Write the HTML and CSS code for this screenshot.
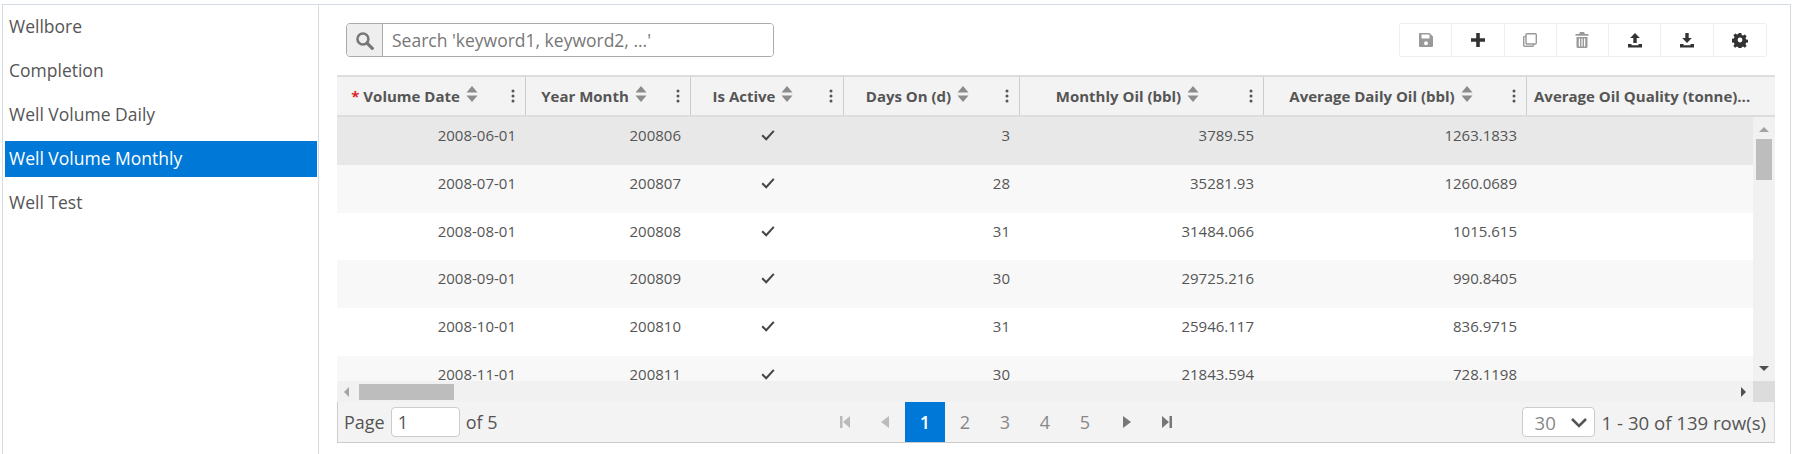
FILE: index.html
```html
<!DOCTYPE html>
<html lang="en">
<head>
    <meta charset="UTF-8">
    <meta name="viewport" content="width=device-width, initial-scale=1.0">
    <title>Well Volume Monthly</title>
    <link rel="stylesheet" href="styles.css">
</head>
<body>

    <svg class="defs">
        <symbol id="sort" viewBox="0 0 12 16"><path d="M6 0l5.500 6.500H.5zM6 16L.5 9.500h11z"/></symbol>
        <symbol id="kebab" viewBox="0 0 4 14"><circle cx="2" cy="2" r="1.500"/><circle cx="2" cy="7" r="1.500"/><circle cx="2" cy="12" r="1.500"/></symbol>
        <symbol id="check" viewBox="0 0 14 12"><path d="M1.200 6.200l4 4 7.600-8.400" fill="none" stroke="currentColor" stroke-width="2"/></symbol>
    </svg>

    <div class="frame">
        <!-- left menu -->
        <ul class="menu">
            <li>Wellbore</li>
            <li>Completion</li>
            <li>Well Volume Daily</li>
            <li class="active">Well Volume Monthly</li>
            <li>Well Test</li>
        </ul>

        <div class="content">
            <div class="toolbar">
                <div class="search">
                    <span class="search-icon">
                        <svg width="19" height="19" viewBox="0 0 18 18"><circle cx="7.500" cy="7.500" r="5.200" fill="none" stroke="currentColor" stroke-width="2.400"/><path d="M11.400 11.400l5 5" stroke="currentColor" stroke-width="3" stroke-linecap="round"/></svg>
                    </span>
                    <input type="text" placeholder="Search 'keyword1, keyword2, ...'">
                </div>
                <div class="actions">
                    <button class="off"><svg width="16" height="16" viewBox="0 0 16 16"><path fill-rule="evenodd" d="M2 1h9.500L15 4.500V14a1 1 0 0 1-1 1H2a1 1 0 0 1-1-1V2a1 1 0 0 1 1-1zm1.500 1.500v4h8v-4zM8 9.200a2 2 0 1 0 0 4 2 2 0 0 0 0-4z"/></svg></button>
                    <button><svg width="16" height="16" viewBox="0 0 16 16"><path d="M6.200 1h3.600v5.200H15v3.600H9.800V15H6.200V9.800H1V6.200h5.200z"/></svg></button>
                    <button class="off"><svg width="16" height="16" viewBox="0 0 16 16"><path fill="none" stroke="currentColor" stroke-width="1.400" d="M5 1.700h8.300a1 1 0 0 1 1 1V11a1 1 0 0 1-1 1H5a1 1 0 0 1-1-1V2.700a1 1 0 0 1 1-1z"/><path fill="none" stroke="currentColor" stroke-width="1.400" d="M4 4.500H2.700a1 1 0 0 0-1 1v7.800a1 1 0 0 0 1 1H10.500a1 1 0 0 0 1-1V12"/></svg></button>
                    <button class="off"><svg width="14" height="16" viewBox="0 0 14 16"><path fill-rule="evenodd" d="M5 0h4l1 2h3.500v1.800H.5V2H4zM1.500 5h11v9.500a1.500 1.500 0 0 1-1.500 1.500H3a1.500 1.500 0 0 1-1.500-1.500zm2.300 1.500V14.500h1.200V6.500zm2.600 0V14.500h1.200V6.500zm2.600 0V14.500h1.200V6.500z"/></svg></button>
                    <button><svg width="16" height="16" viewBox="0 0 16 16"><path d="M8 1l4.800 5H9.700v5H6.300V6H3.200zM1 12h3.500v1.200h7V12H15v3.500H1z"/></svg></button>
                    <button><svg width="16" height="16" viewBox="0 0 16 16"><path d="M6.300 1h3.400v5h3.100L8 11 3.200 6h3.100zM1 12h3.500v1.200h7V12H15v3.500H1z"/></svg></button>
                    <button><svg width="16" height="16" viewBox="0 0 16 16"><path fill-rule="evenodd" d="M6.700 1h2.600l.4 2 1.300.6 1.800-1.100 1.800 1.800-1.100 1.800.6 1.300 2 .4v2.600l-2 .4-.6 1.300 1.100 1.800-1.800 1.800-1.800-1.100-1.300.6-.4 2H6.700l-.4-2-1.300-.6-1.800 1.100-1.800-1.800 1.100-1.800-.6-1.300-2-.4V6.800l2-.4.6-1.300-1.100-1.800 1.800-1.800 1.800 1.100 1.300-.6zM8 5.600a2.400 2.400 0 1 0 0 4.800 2.400 2.400 0 0 0 0-4.800z"/></svg></button>
                </div>
            </div>

            <div class="grid">
                <div class="grid-head">
                    <div class="hcell first"><span class="hlabel"><span class="req">*</span>Volume Date<svg class="sort"><use href="#sort"/></svg></span><svg class="kebab"><use href="#kebab"/></svg></div>
                    <div class="hcell"><span class="hlabel">Year Month<svg class="sort"><use href="#sort"/></svg></span><svg class="kebab"><use href="#kebab"/></svg></div>
                    <div class="hcell"><span class="hlabel">Is Active<svg class="sort"><use href="#sort"/></svg></span><svg class="kebab"><use href="#kebab"/></svg></div>
                    <div class="hcell"><span class="hlabel">Days On (d)<svg class="sort"><use href="#sort"/></svg></span><svg class="kebab"><use href="#kebab"/></svg></div>
                    <div class="hcell"><span class="hlabel">Monthly Oil (bbl)<svg class="sort"><use href="#sort"/></svg></span><svg class="kebab"><use href="#kebab"/></svg></div>
                    <div class="hcell"><span class="hlabel">Average Daily Oil (bbl)<svg class="sort"><use href="#sort"/></svg></span><svg class="kebab"><use href="#kebab"/></svg></div>
                    <div class="hcell last"><span class="hlabel">Average Oil Quality (tonne)...</span></div>
                </div>

                <div class="grid-body">
                    <div class="rows">
                        <div class="row selected"><span>2008-06-01</span><span>200806</span><span class="mid"><svg class="check"><use href="#check"/></svg></span><span>3</span><span>3789.55</span><span>1263.1833</span><span></span></div>
                        <div class="row"><span>2008-07-01</span><span>200807</span><span class="mid"><svg class="check"><use href="#check"/></svg></span><span>28</span><span>35281.93</span><span>1260.0689</span><span></span></div>
                        <div class="row"><span>2008-08-01</span><span>200808</span><span class="mid"><svg class="check"><use href="#check"/></svg></span><span>31</span><span>31484.066</span><span>1015.615</span><span></span></div>
                        <div class="row"><span>2008-09-01</span><span>200809</span><span class="mid"><svg class="check"><use href="#check"/></svg></span><span>30</span><span>29725.216</span><span>990.8405</span><span></span></div>
                        <div class="row"><span>2008-10-01</span><span>200810</span><span class="mid"><svg class="check"><use href="#check"/></svg></span><span>31</span><span>25946.117</span><span>836.9715</span><span></span></div>
                        <div class="row"><span>2008-11-01</span><span>200811</span><span class="mid"><svg class="check"><use href="#check"/></svg></span><span>30</span><span>21843.594</span><span>728.1198</span><span></span></div>
                    </div>
                    <div class="vscroll">
                        <i class="arrow up"></i>
                        <div class="vthumb"></div>
                        <i class="arrow down"></i>
                    </div>
                </div>

                <div class="hscroll">
                    <div class="htrack">
                        <i class="arrow left"></i>
                        <div class="hthumb"></div>
                        <i class="arrow right"></i>
                    </div>
                    <div class="corner"></div>
                </div>

                <div class="pager">
                    <div class="page-input">
                        <span>Page</span>
                        <input type="text" value="1">
                        <span>of 5</span>
                    </div>
                    <div class="pages">
                        <a class="nav dim"><svg width="12" height="14" viewBox="0 0 12 14"><path d="M1 1h2.500v12H1zM11 1v12L4 7z"/></svg></a>
                        <a class="nav dim"><svg width="10" height="14" viewBox="0 0 10 14"><path d="M9 1v12L1 7z"/></svg></a>
                        <a class="current">1</a>
                        <a>2</a>
                        <a>3</a>
                        <a>4</a>
                        <a>5</a>
                        <a class="nav fwd"><svg width="10" height="14" viewBox="0 0 10 14"><path d="M1 1v12l8-6z"/></svg></a>
                        <a class="nav fwd"><svg width="12" height="14" viewBox="0 0 12 14"><path d="M1 1v12l7-6zM8.500 1H11v12H8.500z"/></svg></a>
                    </div>
                    <div class="page-size">
                        <div class="size-select">
                            <span>30</span>
                            <svg width="18" height="11" viewBox="0 0 18 11"><path d="M2 2l7 7 7-7" fill="none" stroke="currentColor" stroke-width="2.600"/></svg>
                        </div>
                        <span>1 - 30 of 139 row(s)</span>
                    </div>
                </div>
            </div>
        </div>
    </div>

</body>
</html>
```

FILE: styles.css
```css
html, body {
    margin: 0;
    padding: 0;
    height: 100%;
    overflow: hidden;
    background-color: #ffffff;
}
body {
    font-family: "Open Sans", Arial, sans-serif;
    color: #555;
    padding: 4px 2px 0 2px;
    box-sizing: border-box;
}
.defs {
    display: none;
}
.frame {
    display: flex;
    height: 460px;
    border-top: 1px solid #d5dbe3;
    border-left: 1px solid #d5dbe3;
    border-right: 1px solid #d5dbe3;
}

/* left menu */
.menu {
    width: 316px;
    flex: none;
    margin: 0;
    padding: 4px 1px 0 2px;
    box-sizing: border-box;
    list-style: none;
    border-right: 1px solid #d5dbe3;
}
.menu li {
    height: 36px;
    line-height: 35px;
    margin-bottom: 8px;
    padding-left: 4px;
    font-size: 17.500px;
    color: #555;
}
.menu li.active {
    background-color: #0078d7;
    color: #fff;
}

.content {
    flex: 1;
    padding: 18px 15px 0 18px;
    min-width: 0;
}
.toolbar {
    display: flex;
    justify-content: space-between;
    padding: 0 8px 0 9px;
    height: 34px;
    margin-bottom: 18px;
}

/* search box */
.search {
    display: flex;
    width: 428px;
    height: 34px;
    border: 1px solid #aaa;
    border-radius: 4px;
    box-sizing: border-box;
    overflow: hidden;
}
.search-icon {
    width: 35px;
    flex: none;
    display: flex;
    align-items: center;
    justify-content: center;
    background-color: #eee;
    border-right: 1px solid #aaa;
    color: #777;
}
.search input {
    flex: 1;
    min-width: 0;
    border: none;
    outline: none;
    padding: 0 9px;
    font-family: inherit;
    font-size: 17.500px;
    color: #555;
}
.search input::placeholder {
    color: #777;
    opacity: 1;
}

/* action buttons */
.actions {
    display: flex;
    height: 34px;
    border: 1px solid #eee;
    border-radius: 3px;
    box-sizing: border-box;
}
.actions button {
    width: 52.300px;
    padding: 0;
    border: none;
    border-right: 1px solid #eee;
    background-color: #fff;
    color: #333;
    display: flex;
    align-items: center;
    justify-content: center;
    cursor: pointer;
}
.actions button:last-child {
    border-right: none;
}
.actions button.off {
    color: #999;
}
.actions svg {
    fill: currentColor;
}

/* grid */
.grid-head, .row {
    display: grid;
    grid-template-columns: 189px 165px 153px 176px 244px 263px 1fr;
}
.grid-head {
    height: 42px;
    box-sizing: border-box;
    background-color: #f3f3f3;
    border-top: 2px solid #ddd;
    border-bottom: 2px solid #ddd;
}
.hcell {
    display: flex;
    align-items: center;
    border-right: 1px solid #ccc;
    font-size: 15px;
    font-weight: 700;
    white-space: nowrap;
    overflow: hidden;
}
.hcell.last {
    border-right: none;
    padding-left: 7px;
}
.hlabel {
    flex: 1;
    display: flex;
    align-items: center;
    justify-content: center;
}
.hcell.first .hlabel {
    padding-right: 5px;
}
.hcell.last .hlabel {
    justify-content: flex-start;
}
.req {
    color: #e0262c;
    margin-right: 4px;
}
.sort {
    width: 12px;
    height: 16px;
    margin: -5px 0 0 6px;
    fill: #8c8c8c;
}
.kebab {
    width: 4px;
    height: 14px;
    flex: none;
    margin: 0 10px 0 14px;
    fill: #555;
}

.grid-body {
    display: flex;
    height: 264px;
}
.rows {
    flex: 1;
    min-width: 0;
    overflow: hidden;
}
.row {
    height: 47.800px;
    font-size: 15px;
    background-color: #fff;
}
.row:nth-child(even) {
    background-color: #f8f8f8;
}
.row.selected {
    background-color: #e8e8e8;
}
.row span {
    padding: 0 10px;
    text-align: right;
    line-height: 36px;
}
.row span.mid {
    text-align: center;
}
.check {
    width: 14px;
    height: 12px;
    color: #444;
}

/* scrollbars */
.vscroll {
    position: relative;
    width: 22px;
    flex: none;
    background-color: #f1f1f1;
}
.vthumb {
    position: absolute;
    top: 22px;
    left: 3px;
    width: 16px;
    height: 41px;
    background-color: #bdbdbd;
}
.arrow {
    position: absolute;
    width: 0;
    height: 0;
    border-style: solid;
    border-color: transparent;
}
.arrow.up {
    top: 10px;
    left: 6px;
    border-width: 0 5px 5px 5px;
    border-bottom-color: #a3a3a3;
}
.arrow.down {
    bottom: 10px;
    left: 6px;
    border-width: 5px 5px 0 5px;
    border-top-color: #505050;
}
.arrow.left {
    top: 6px;
    left: 7px;
    border-width: 5px 5px 5px 0;
    border-right-color: #a3a3a3;
}
.arrow.right {
    top: 6px;
    right: 7px;
    border-width: 5px 0 5px 5px;
    border-left-color: #505050;
}
.hscroll {
    display: flex;
    height: 21px;
}
.htrack {
    position: relative;
    flex: 1;
    background-color: #f1f1f1;
}
.hthumb {
    position: absolute;
    top: 3px;
    left: 22px;
    width: 95px;
    height: 16px;
    background-color: #bdbdbd;
}
.corner {
    width: 22px;
    background-color: #dcdcdc;
}

/* pager */
.pager {
    display: flex;
    align-items: stretch;
    height: 41px;
    box-sizing: border-box;
    background-color: #f3f3f3;
    border-left: 1px solid #ccc;
    border-right: 1px solid #ddd;
    border-bottom: 1px solid #ccc;
    font-size: 18px;
}
.page-input {
    width: 487px;
    flex: none;
    padding-left: 6px;
    box-sizing: border-box;
    display: flex;
    align-items: center;
    gap: 6px;
}
.page-input input {
    width: 69px;
    height: 30px;
    box-sizing: border-box;
    border: 1px solid #ccc;
    border-radius: 4px;
    padding: 0 6px;
    font-family: inherit;
    font-size: 18px;
    color: #555;
}
.pages {
    display: flex;
}
.pages a {
    width: 40px;
    display: flex;
    align-items: center;
    justify-content: center;
    color: #888;
}
.pages a.current {
    background-color: #0078d7;
    color: #fff;
    font-weight: 600;
}
.pages a.nav svg {
    fill: #777;
}
.pages a.dim svg {
    fill: #bbb;
}
.pages a.fwd svg {
    margin-left: 3px;
}
.page-size {
    margin-left: auto;
    padding-right: 8px;
    display: flex;
    align-items: center;
    gap: 7px;
    font-size: 18.600px;
}
.size-select {
    width: 73px;
    height: 30px;
    box-sizing: border-box;
    padding: 0 6px 0 12px;
    display: flex;
    align-items: center;
    justify-content: space-between;
    background-color: #fff;
    border: 1px solid #ccc;
    border-radius: 4px;
    color: #888;
}
.size-select svg {
    color: #555;
}
```
